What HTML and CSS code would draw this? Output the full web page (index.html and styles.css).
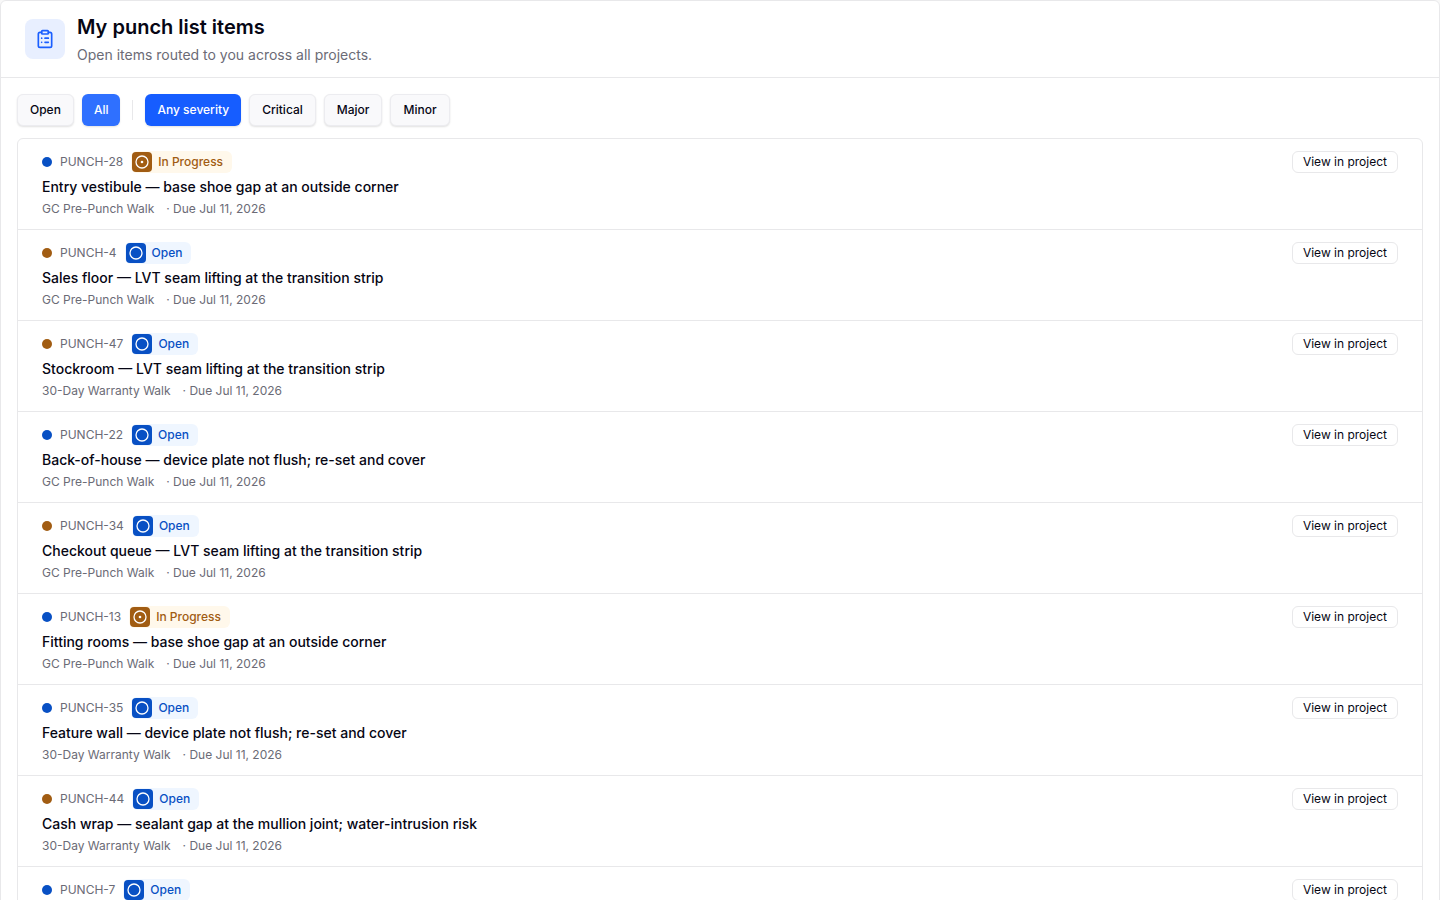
FILE: index.html
```html
<!DOCTYPE html>
<html lang="en">
<head>
    <meta charset="UTF-8">
    <meta name="viewport" content="width=device-width, initial-scale=1.0">
    <title>My punch list items</title>
    <link rel="stylesheet" href="styles.css">
</head>
<body>

    <!-- Status icons shared by the badges -->
    <svg class="sprite" aria-hidden="true">
        <symbol id="icon-open" viewBox="0 0 14 14">
            <circle cx="7" cy="7" r="6" fill="none" stroke="currentColor" stroke-width="1.3"/>
        </symbol>
        <symbol id="icon-progress" viewBox="0 0 14 14">
            <circle cx="7" cy="7" r="6" fill="none" stroke="currentColor" stroke-width="1.3"/>
            <circle cx="7" cy="7" r="1.3" fill="currentColor"/>
        </symbol>
    </svg>

    <main class="panel">
        <header class="header">
            <div class="header-icon">
                <svg width="20" height="20" viewBox="0 0 24 24" fill="none" stroke="currentColor" stroke-width="2" stroke-linecap="round" stroke-linejoin="round" aria-hidden="true">
                    <rect x="8" y="2" width="8" height="4" rx="1"/>
                    <path d="M16 4h2a2 2 0 0 1 2 2v14a2 2 0 0 1-2 2H6a2 2 0 0 1-2-2V6a2 2 0 0 1 2-2h2"/>
                    <path d="M12 11h4M12 16h4M8 11h.01M8 16h.01"/>
                </svg>
            </div>
            <div class="header-text">
                <h1>My punch list items</h1>
                <p>Open items routed to you across all projects.</p>
            </div>
        </header>

        <div class="content">
            <div class="filters">
                <button class="chip" type="button">Open</button>
                <button class="chip active hovered" type="button">All</button>
                <span class="divider"></span>
                <button class="chip active" type="button">Any severity</button>
                <button class="chip" type="button">Critical</button>
                <button class="chip" type="button">Major</button>
                <button class="chip" type="button">Minor</button>
            </div>

            <ul class="list">
                <li class="item">
                    <div class="item-body">
                        <div class="item-top">
                            <span class="dot blue"></span>
                            <span class="code">PUNCH-28</span>
                            <span class="badge progress"><span class="badge-icon"><svg><use href="#icon-progress"/></svg></span>In Progress</span>
                        </div>
                        <h2>Entry vestibule — base shoe gap at an outside corner</h2>
                        <p class="meta"><span>GC Pre-Punch Walk</span><span>· Due Jul 11, 2026</span></p>
                    </div>
                    <a class="view" href="#">View in project</a>
                </li>
                <li class="item">
                    <div class="item-body">
                        <div class="item-top">
                            <span class="dot brown"></span>
                            <span class="code">PUNCH-4</span>
                            <span class="badge open"><span class="badge-icon"><svg><use href="#icon-open"/></svg></span>Open</span>
                        </div>
                        <h2>Sales floor — LVT seam lifting at the transition strip</h2>
                        <p class="meta"><span>GC Pre-Punch Walk</span><span>· Due Jul 11, 2026</span></p>
                    </div>
                    <a class="view" href="#">View in project</a>
                </li>
                <li class="item">
                    <div class="item-body">
                        <div class="item-top">
                            <span class="dot brown"></span>
                            <span class="code">PUNCH-47</span>
                            <span class="badge open"><span class="badge-icon"><svg><use href="#icon-open"/></svg></span>Open</span>
                        </div>
                        <h2>Stockroom — LVT seam lifting at the transition strip</h2>
                        <p class="meta"><span>30-Day Warranty Walk</span><span>· Due Jul 11, 2026</span></p>
                    </div>
                    <a class="view" href="#">View in project</a>
                </li>
                <li class="item">
                    <div class="item-body">
                        <div class="item-top">
                            <span class="dot blue"></span>
                            <span class="code">PUNCH-22</span>
                            <span class="badge open"><span class="badge-icon"><svg><use href="#icon-open"/></svg></span>Open</span>
                        </div>
                        <h2>Back-of-house — device plate not flush; re-set and cover</h2>
                        <p class="meta"><span>GC Pre-Punch Walk</span><span>· Due Jul 11, 2026</span></p>
                    </div>
                    <a class="view" href="#">View in project</a>
                </li>
                <li class="item">
                    <div class="item-body">
                        <div class="item-top">
                            <span class="dot brown"></span>
                            <span class="code">PUNCH-34</span>
                            <span class="badge open"><span class="badge-icon"><svg><use href="#icon-open"/></svg></span>Open</span>
                        </div>
                        <h2>Checkout queue — LVT seam lifting at the transition strip</h2>
                        <p class="meta"><span>GC Pre-Punch Walk</span><span>· Due Jul 11, 2026</span></p>
                    </div>
                    <a class="view" href="#">View in project</a>
                </li>
                <li class="item">
                    <div class="item-body">
                        <div class="item-top">
                            <span class="dot blue"></span>
                            <span class="code">PUNCH-13</span>
                            <span class="badge progress"><span class="badge-icon"><svg><use href="#icon-progress"/></svg></span>In Progress</span>
                        </div>
                        <h2>Fitting rooms — base shoe gap at an outside corner</h2>
                        <p class="meta"><span>GC Pre-Punch Walk</span><span>· Due Jul 11, 2026</span></p>
                    </div>
                    <a class="view" href="#">View in project</a>
                </li>
                <li class="item">
                    <div class="item-body">
                        <div class="item-top">
                            <span class="dot blue"></span>
                            <span class="code">PUNCH-35</span>
                            <span class="badge open"><span class="badge-icon"><svg><use href="#icon-open"/></svg></span>Open</span>
                        </div>
                        <h2>Feature wall — device plate not flush; re-set and cover</h2>
                        <p class="meta"><span>30-Day Warranty Walk</span><span>· Due Jul 11, 2026</span></p>
                    </div>
                    <a class="view" href="#">View in project</a>
                </li>
                <li class="item">
                    <div class="item-body">
                        <div class="item-top">
                            <span class="dot brown"></span>
                            <span class="code">PUNCH-44</span>
                            <span class="badge open"><span class="badge-icon"><svg><use href="#icon-open"/></svg></span>Open</span>
                        </div>
                        <h2>Cash wrap — sealant gap at the mullion joint; water-intrusion risk</h2>
                        <p class="meta"><span>30-Day Warranty Walk</span><span>· Due Jul 11, 2026</span></p>
                    </div>
                    <a class="view" href="#">View in project</a>
                </li>
                <li class="item">
                    <div class="item-body">
                        <div class="item-top">
                            <span class="dot blue"></span>
                            <span class="code">PUNCH-7</span>
                            <span class="badge open"><span class="badge-icon"><svg><use href="#icon-open"/></svg></span>Open</span>
                        </div>
                    </div>
                    <a class="view" href="#">View in project</a>
                </li>
            </ul>
        </div>
    </main>

</body>
</html>
```

FILE: styles.css
```css
* { margin: 0; padding: 0; box-sizing: border-box; }
html { scrollbar-width: none; }
body {
    font-family: Inter, sans-serif;
    font-size: 12px; line-height: 16px;
    color: #060614; background: #f8f8f8;
}
.sprite { display: none; }
.panel {
    background: white; border: 1px solid #e8e8ea;
    border-radius: 6px;
}

/* Header */
.header {
    display: flex; align-items: center; gap: 12px;
    padding: 12px 24px; border-bottom: 1px solid #e8e8ea;
}
.header-icon {
    display: flex; align-items: center; justify-content: center;
    width: 40px; height: 40px; border-radius: 8px;
    background: #e8efff; color: #1a5fff;
}
.header-text { display: flex; flex-direction: column; gap: 4px; }
h1 { font-size: 20px; line-height: 28px; font-weight: 600; }
.header-text p { font-size: 14px; line-height: 20px; color: #6b6b76; }

/* Filters */
.content {
    display: flex; flex-direction: column; gap: 12px;
    padding: 16px;
}
.filters { display: flex; align-items: center; gap: 8px; }
.chip {
    height: 32px; padding: 0 12px;
    font: inherit; font-weight: 500; color: #060614;
    background: #f9f9fb; border: 1px solid #ececf0; border-radius: 6px;
    box-shadow: 0 1px 2px rgba(0, 0, 0, 0.12);
    cursor: pointer;
}
.chip.active { background: #165dff; color: white; border: none; }
.chip.active.hovered { background: #2f70ff; }
.divider { width: 1px; height: 20px; margin: 0 4px; background: #e8e8ea; }

/* Items */
.list {
    list-style: none;
    border: 1px solid #e8e8ea; border-radius: 6px;
}
.item {
    display: flex; align-items: flex-start; justify-content: space-between; gap: 16px;
    padding: 12px 24px; min-height: 90px;
}
.item + .item { border-top: 1px solid #e8e8ea; min-height: 91px; }
.item-body { display: flex; flex-direction: column; gap: 4px; }
.item-top { display: flex; align-items: center; gap: 8px; }
.dot { width: 10px; height: 10px; border-radius: 50%; }
.dot.blue { background: #0850c4; }
.dot.brown { background: #a15c12; }
.code { color: #6b6b76; }
.badge {
    display: flex; align-items: center; gap: 6px;
    padding-right: 8px; border: 1px solid transparent;
    border-radius: 6px; font-weight: 500;
}
.badge-icon {
    display: flex; align-items: center; justify-content: center;
    width: 20px; height: 20px; border-radius: 4px; color: white;
}
.badge-icon svg { width: 14px; height: 14px; }
.badge.open { background: #eff6ff; color: #0850c4; }
.badge.open .badge-icon { background: #0850c4; color: white; }
.badge.progress { background: #fff8eb; color: #a15c12; }
.badge.progress .badge-icon { background: #a15c12; color: white; }
h2 { font-size: 14px; line-height: 20px; font-weight: 500; }
.meta { display: flex; gap: 12px; color: #6b6b76; }
.view {
    padding: 2px 10px;
    border: 1px solid #e8e8ea; border-radius: 6px;
    color: #060614; text-decoration: none; white-space: nowrap;
}
```
